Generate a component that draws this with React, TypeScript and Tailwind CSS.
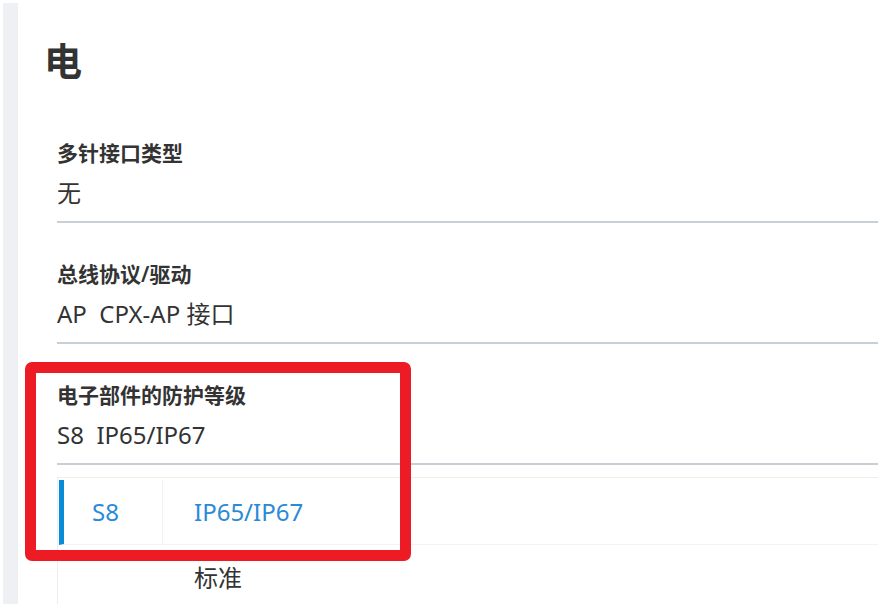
import React from 'react'

const rows = [
  { label: '多针接口类型', value: '无' },
  { label: '总线协议/驱动', value: 'AP  CPX-AP 接口' },
  { label: '电子部件的防护等级', value: 'S8  IP65/IP67' },
]

function SpecRow({ label, value }: { label: string; value: string }) {
  return (
    <div className="pt-[37px] pb-[12px] border-b-2 border-[#c9cfd7]">
      <div className="text-[21px] leading-[28px] font-semibold text-[#333]">{label}</div>
      <div className="mt-[10px] text-[24px] leading-[32px] text-[#333] whitespace-pre">{value}</div>
    </div>
  )
}

export default function App() {
  return (
    <div
      className="relative flex w-[878px] h-[604px] overflow-hidden bg-white pt-[3px] pl-[3px]"
      style={{ fontFamily: '"Noto Sans", "Noto Sans CJK SC", sans-serif' }}
    >
      {/* side strip */}
      <div className="w-[15px] shrink-0 bg-[#eff0f3]" />

      <div className="flex-1 pl-[26px]">
        <h2 className="mt-[35px] mb-[20px] text-[38px] leading-[44px] font-bold text-[#333]">电</h2>

        <div className="pl-[13px]">
          {rows.map((r) => (
            <SpecRow key={r.label} label={r.label} value={r.value} />
          ))}

          {/* options table */}
          <div className="mt-[12px] border-l border-t border-[#eeeeee] pt-[2px] pl-[1px] h-[200px]">
            <div className="flex h-[65px] border-l-[5px] border-l-[#0a8bd6] border-b border-b-[#f3f3f3]">
              <div className="w-[99px] flex items-center pl-[28px] border-r border-[#f3f3f3] text-[24px] text-[#2b8ad6]">
                S8
              </div>
              <div className="flex-1 flex items-center pl-[31px] text-[24px] text-[#2b8ad6]">IP65/IP67</div>
            </div>
            <div className="pl-[135px] pt-[17px] text-[24px] leading-[32px] text-[#333]">标准</div>
          </div>
        </div>
      </div>

      {/* annotation box */}
      <div className="absolute left-[25px] top-[362px] w-[386px] h-[199px] border-[11px] border-[#ed1c24] rounded-[7px]" />
    </div>
  )
}
